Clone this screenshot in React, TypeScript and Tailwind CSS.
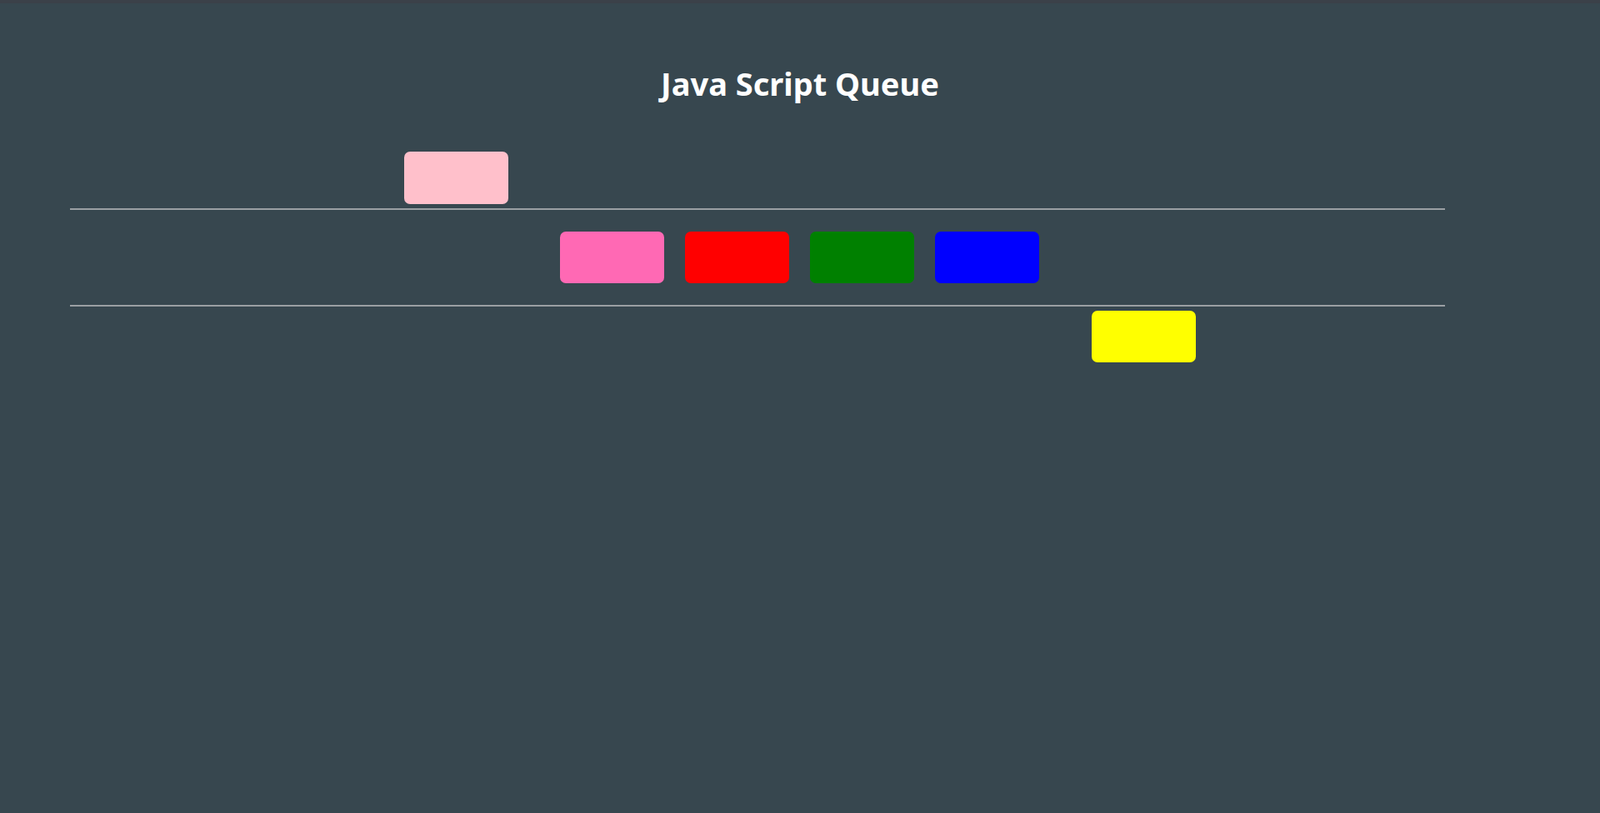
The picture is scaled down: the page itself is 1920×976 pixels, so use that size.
export default function App() {
  const queue = [
    { id: "hotpink", color: "bg-[#ff69b4]" },
    { id: "red", color: "bg-[#ff0000]" },
    { id: "green", color: "bg-[#008000]" },
    { id: "blue", color: "bg-[#0000ff]" },
  ];

  return (
    <div className="min-h-[976px] w-full bg-[#37474f] border-t-4 border-[#3b4149] overflow-hidden">
      <h1 className="pt-[77px] text-center text-[38px] leading-[38px] font-bold text-white font-['Liberation_Serif',serif]">
        Java Script Queue
      </h1>

      <div className="ml-[84px] w-[1650px]">
        {/* dequeued item */}
        <div className="mt-[63px] ml-[401px] h-[63px] w-[125px] rounded-[7px] bg-[#ffc0cb]" />
        <div className="mt-[5px] h-[2px] bg-[#9a9fa3]" />

        {/* queue */}
        <div className="flex gap-[25px] pl-[588px] py-[26px]">
          {queue.map((q) => (
            <div key={q.id} className={`h-[62px] w-[125px] rounded-[7px] ${q.color}`} />
          ))}
        </div>
        <div className="h-[2px] bg-[#9a9fa3]" />

        {/* incoming item */}
        <div className="mt-[5px] ml-[1226px] h-[62px] w-[125px] rounded-[7px] bg-[#ffff00]" />
      </div>
    </div>
  );
}
